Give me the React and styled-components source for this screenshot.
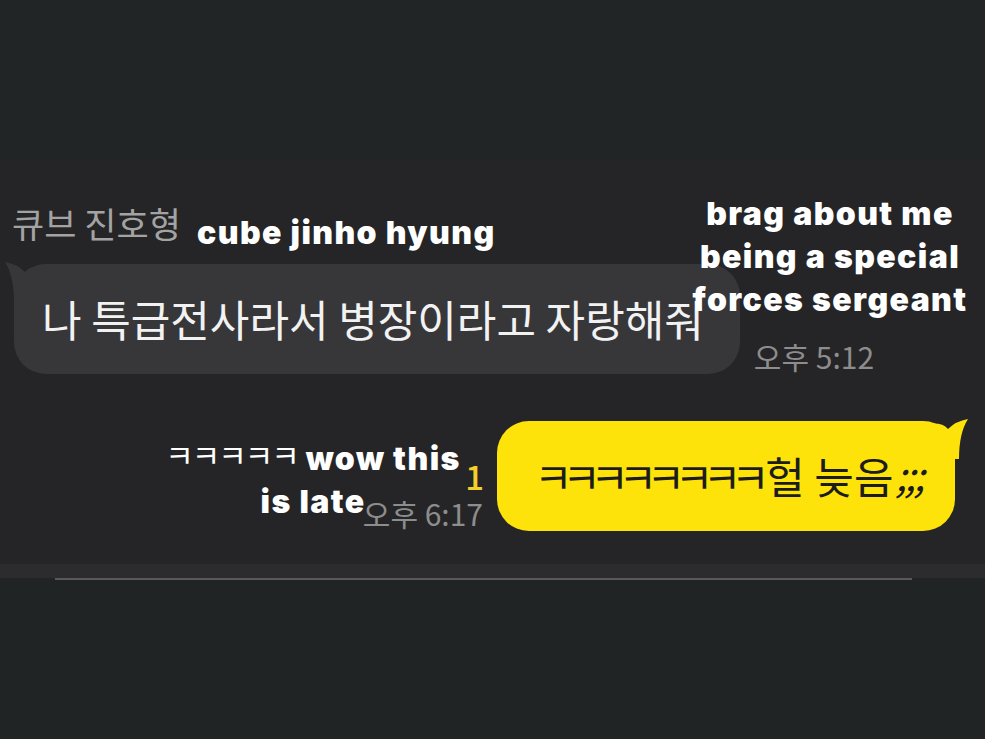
import styled, { createGlobalStyle } from 'styled-components';

const GlobalStyle = createGlobalStyle`
    html, body {
        margin: 0;
        padding: 0;
        background: #202425;
    }
    #root {
        width: 985px;
        height: 739px;
        overflow: hidden;
    }
`

const KR = `"Noto Sans CJK KR", "Noto Sans", sans-serif`;
const CAPTION = `Inter, "DejaVu Sans", "Liberation Sans", sans-serif`;

const Ear = ({ color, flip }) => (
    <EarSvg viewBox="0 0 40 40" flip={flip ? 1 : 0} width="40" height="40">
        <path d="M0 0 Q9 14 9 40 L40 40 L40 5 Q26 3 20 10 Q12 2 0 0 Z" fill={color} />
    </EarSvg>
)

const App = () => {
    return (
        <Screen>
            <GlobalStyle />
            <TopBand />
            <ChatArea>
                <SenderName>큐브 진호형</SenderName>
                <IncomingRow>
                    <Bubble bg="#37373a" fg="#f2f2f2">
                        <Ear color="#37373a" />
                        나 특급전사라서 병장이라고 자랑해줘
                    </Bubble>
                    <Meta>
                        <Time>오후 5:12</Time>
                    </Meta>
                </IncomingRow>
                <OutgoingRow>
                    <Meta right>
                        <Unread>1</Unread>
                        <Time>오후 6:17</Time>
                    </Meta>
                    <Bubble bg="#fde30a" fg="#1c1c1c" out>
                        <Ear color="#fde30a" flip />
                        <Laugh>ㅋㅋㅋㅋㅋㅋㅋㅋ</Laugh>헐 늦음<Semi>;;;</Semi>
                    </Bubble>
                </OutgoingRow>

                <Caption top="50" left="197">cube jinho hyung</Caption>
                <Caption top="31" left="680" width="300" center>
                    brag about me<br />being a special<br />forces sergeant
                </Caption>
                <Caption top="271" left="160" width="306" center>
                    <SmallLaugh>ㅋㅋㅋㅋㅋ</SmallLaugh> wow this<br />is late
                </Caption>
            </ChatArea>
            <InputStrip />
            <InputLine />
        </Screen>
    )
}

export default App

const Screen = styled.div`
    width: 985px;
    height: 739px;
    background: #202425;
    display: flex;
    flex-direction: column;
`
const TopBand = styled.div`
    height: 161px;
    background: #212526;
`
const ChatArea = styled.div`
    position: relative;
    height: 403px;
    background: #252527;
    display: flex;
    flex-direction: column;
    padding: 40px 30px 0 12px;
    box-sizing: border-box;
`
const SenderName = styled.div`
    font-family: ${KR};
    font-size: 35px;
    line-height: 44px;
    color: #a3a3a3;
`
const IncomingRow = styled.div`
    display: flex;
    align-items: flex-end;
    margin-top: 19px;
    margin-left: 2px;
    gap: 14px;
`
const OutgoingRow = styled.div`
    display: flex;
    align-items: flex-end;
    justify-content: flex-end;
    margin-top: 47px;
    gap: 14px;
`
const Bubble = styled.div`
    position: relative;
    height: 110px;
    box-sizing: border-box;
    display: flex;
    align-items: center;
    padding-right: ${p => (p.out ? '0' : '36px')};
    padding-left: ${p => (p.out ? '37px' : '28px')};
    padding-bottom: 2px;
    border-radius: 32px;
    background: ${p => p.bg};
    color: ${p => p.fg};
    font-family: ${KR};
    font-size: 43px;
    white-space: nowrap;
    width: ${p => (p.out ? '458px' : 'auto')};
`
const EarSvg = styled.svg`
    position: absolute;
    top: -2px;
    ${p => (p.flip ? 'right: -13px; transform: scaleX(-1);' : 'left: -9px;')}
`
const Laugh = styled.span`
    font-size: 42px;
    letter-spacing: -10.5px;
    margin-right: 6px;
`
const Semi = styled.span`
    font-size: 40px;
    font-style: italic;
    letter-spacing: -2px;
    align-self: flex-end;
    margin-bottom: 26px;
    margin-left: 2px;
`
const Meta = styled.div`
    display: flex;
    flex-direction: column;
    align-items: ${p => (p.right ? 'flex-end' : 'flex-start')};
    padding-bottom: 1px;
`
const Time = styled.div`
    font-family: ${KR};
    font-size: 30px;
    line-height: 34px;
    color: #8d8d8d;
`
const Unread = styled.div`
    font-family: ${KR};
    font-size: 33px;
    line-height: 36px;
    font-weight: 500;
    color: #f3cf2a;
    margin-bottom: 2px;
    margin-right: -1px;
`
const Caption = styled.div`
    position: absolute;
    top: ${p => p.top}px;
    left: ${p => p.left}px;
    width: ${p => (p.width ? `${p.width}px` : 'auto')};
    text-align: ${p => (p.center ? 'center' : 'left')};
    font-family: ${CAPTION};
    font-weight: 900;
    font-size: 32px;
    letter-spacing: 1.4px;
    line-height: 43px;
    color: #ffffff;
    white-space: nowrap;
`
const SmallLaugh = styled.span`
    font-family: ${KR};
    font-weight: 400;
    font-size: 31px;
    letter-spacing: -2px;
    vertical-align: 3px;
`
const InputStrip = styled.div`
    height: 14px;
    background: #2c2c2e;
`
const InputLine = styled.div`
    height: 2px;
    margin: 0 73px 0 55px;
    background: #59595c;
`
